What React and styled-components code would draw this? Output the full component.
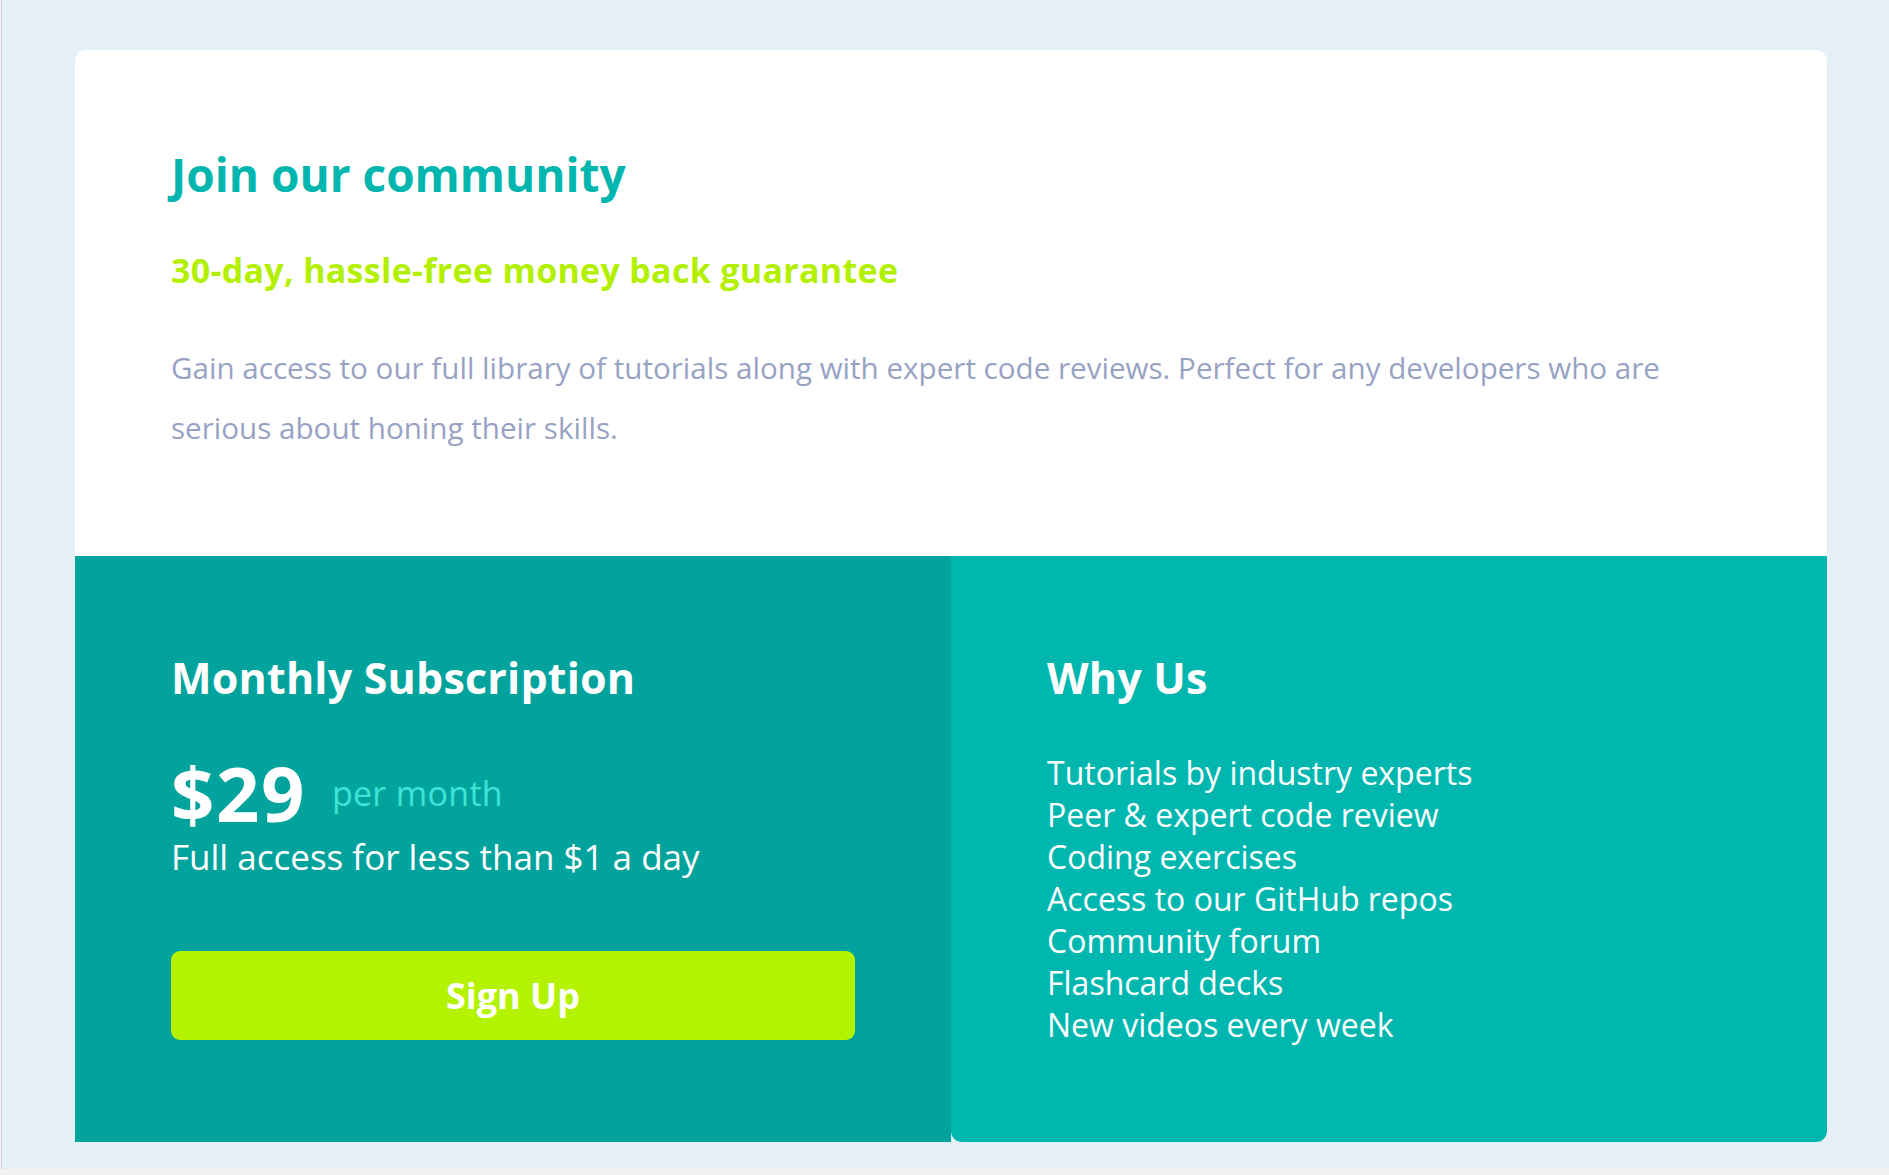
import React from "react";
import styled, { createGlobalStyle } from "styled-components";

const Global = createGlobalStyle`
  html, body { margin: 0; padding: 0; background: #f2f2f2; }
  body { font-family: "Open Sans", "Liberation Sans", sans-serif; }
  * { box-sizing: border-box; }
`;

const Page = styled.div`
  margin-left: 1px;
  border-left: 1px solid #cfd3d6;
  height: 1169px;
  background: #e4eff6;
  padding: 50px 62px 27px 73px;
`;

const Card = styled.main`
  display: grid;
  grid-template-columns: 1fr 1fr;
  grid-template-rows: 506px 586px;
  border-radius: 11px;
  height: 1092px;
`;

const Top = styled.section`
  grid-column: 1 / 3;
  background: #ffffff;
  border-radius: 11px 11px 0 0;
  padding: 96px 96px 0 96px;
`;

const Title = styled.h1`
  margin: 0;
  font-size: 46px;
  line-height: 56px;
  font-weight: 700;
  color: #00b6ae;
`;

const Subtitle = styled.h2`
  margin: 46px 0 0;
  font-size: 34px;
  line-height: 44px;
  font-weight: 700;
  letter-spacing: 0.3px;
  color: #b3f000;
`;

const Text = styled.p`
  margin: 46px 0 0;
  font-size: 29.6px;
  line-height: 60px;
  color: #98a3c4;
`;

const Panel = styled.section`
  background: ${(p) => p.$bg};
  border-radius: ${(p) => p.$radius};
  padding: 94px 96px 0 96px;
  color: #ffffff;
  display: flex;
  flex-direction: column;
`;

const PanelTitle = styled.h3`
  margin: 0;
  font-size: 43px;
  line-height: 56px;
  font-weight: 700;
  letter-spacing: 0.2px;
`;

const PriceRow = styled.div`
  display: flex;
  align-items: center;
  gap: 26px;
  margin-top: 47px;
`;

const Price = styled.span`
  font-size: 76px;
  line-height: 80px;
  font-weight: 700;
  letter-spacing: 1.5px;
`;

const Per = styled.span`
  font-size: 34px;
  letter-spacing: 0.3px;
  color: #3fe3d6;
`;

const Note = styled.p`
  margin: 2px 0 0;
  font-size: 35px;
  line-height: 44px;
`;

const Button = styled.button`
  margin-top: 72px;
  width: 100%;
  height: 89px;
  border: none;
  border-radius: 9px;
  background: #b3f300;
  color: #ffffff;
  font-family: inherit;
  font-size: 36px;
  font-weight: 700;
  cursor: pointer;
`;

const List = styled.ul`
  list-style: none;
  margin: 46px 0 0;
  padding: 0;
`;

const Item = styled.li`
  font-size: 32px;
  line-height: 42px;
`;

const features = [
  "Tutorials by industry experts",
  "Peer & expert code review",
  "Coding exercises",
  "Access to our GitHub repos",
  "Community forum",
  "Flashcard decks",
  "New videos every week",
];

export default function App() {
  return (
    <>
      <Global />
      <Page>
        <Card>
          <Top>
            <Title>Join our community</Title>
            <Subtitle>30-day, hassle-free money back guarantee</Subtitle>
            <Text>
              Gain access to our full library of tutorials along with expert code reviews. Perfect for any
              developers who are serious about honing their skills.
            </Text>
          </Top>
          <Panel $bg="#02a39c" $radius="0">
            <PanelTitle>Monthly Subscription</PanelTitle>
            <PriceRow>
              <Price>$29</Price>
              <Per>per month</Per>
            </PriceRow>
            <Note>Full access for less than $1 a day</Note>
            <Button>Sign Up</Button>
          </Panel>
          <Panel $bg="#00b7b0" $radius="0 0 11px 11px">
            <PanelTitle>Why Us</PanelTitle>
            <List>
              {features.map((f) => (
                <Item key={f}>{f}</Item>
              ))}
            </List>
          </Panel>
        </Card>
      </Page>
    </>
  );
}
